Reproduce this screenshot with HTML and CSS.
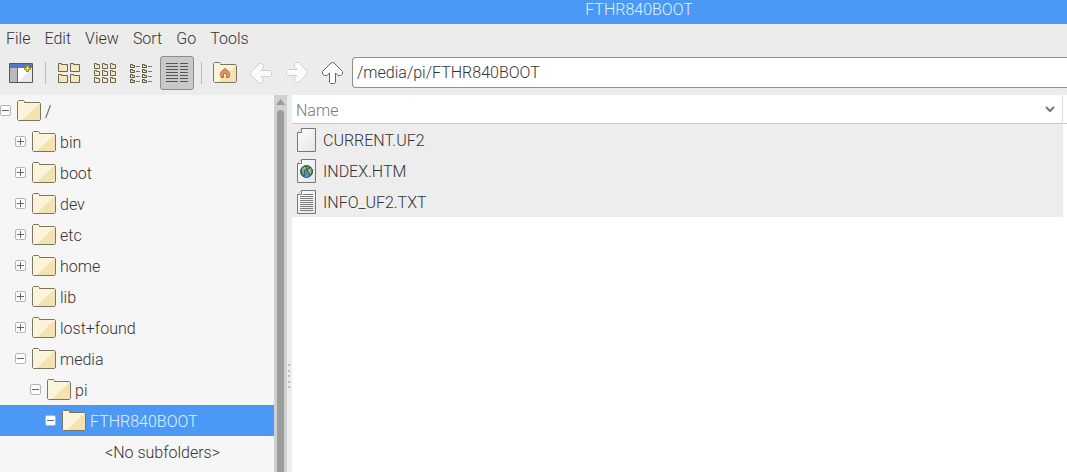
FILE: index.html
```html
<!DOCTYPE html>
<html lang="en">
<head>
    <meta charset="UTF-8">
    <meta name="viewport" content="width=device-width, initial-scale=1.0">
    <title>FTHR840BOOT</title>
    <link rel="stylesheet" href="styles.css">
</head>
<body>
    <!-- shared icons -->
    <svg class="defs" aria-hidden="true">
        <defs>
            <linearGradient id="paper" x1="0" y1="0" x2="1" y2="1">
                <stop offset="0" stop-color="#ffffff"/>
                <stop offset="1" stop-color="#e4e4e4"/>
            </linearGradient>
            <symbol id="folder" viewBox="0 0 24 22">
                <path d="M.5 19.500V1.500l1-1h5l1 1v1h15l1 1v16l-1 1h-21z" fill="#f4e3b0"/>
                <path d="M1 20V1h6v2h16L5 20z" fill="#fbf3da"/>
                <path d="M.5 19.500V1.500l1-1h5l1 1v1h15l1 1v16l-1 1h-21z" fill="none" stroke="#7d7564"/>
            </symbol>
            <symbol id="mini" viewBox="0 0 10 9">
                <path d="M.5 8.500v-8h3v1h6v7z" fill="#f8e6bd" stroke="#6c6552"/>
            </symbol>
            <symbol id="tiny" viewBox="0 0 6 6">
                <path d="M.5 5.500v-5h2v1h3v4z" fill="#f8e6bd" stroke="#6c6552"/>
            </symbol>
            <symbol id="page" viewBox="0 0 19 24">
                <path d="M4.500.5h14v23H.5v-19z" fill="url(#paper)" stroke="#777"/>
                <path d="M.5 4.500h4v-4" fill="#fff" stroke="#777"/>
            </symbol>
            <symbol id="arrow" viewBox="0 0 22 22">
                <path class="arrow-shape" d="M10.500.5Q12 .5 13 2L20.500 9.500V12L18.500 13.500H16L13.500 11V20.500L12.500 21.500H8.500L7.500 20.500V11L5 13.500H2.500L.5 12V9.500L8 2Q9 .5 10.500.5z" stroke="currentColor"/>
            </symbol>
        </defs>
    </svg>

    <header class="titlebar">
        <h1>FTHR840BOOT</h1>
    </header>
    <nav class="menubar">
        <button>File</button>
        <button>Edit</button>
        <button>View</button>
        <button>Sort</button>
        <button>Go</button>
        <button>Tools</button>
    </nav>
    <div class="toolbar">
        <button class="tool" aria-label="New window">
            <svg width="24" height="22" viewBox="0 0 24 22">
                <path d="M.5 1.500h23v19H.5z" fill="#e9e9e9"/>
                <path d="M1 6h7v14H1z" fill="#b9b9b9"/>
                <path d="M9 20V6h14z" fill="#fff"/>
                <path d="M1 2h22v4H1z" fill="#5873c8"/>
                <path d="M8.500 6v14" stroke="#666"/>
                <path d="M.5 1.500h23v19H.5z" fill="none" stroke="#55565c"/>
                <path d="M17.500 3.500h2v2h2v2h-2v2h-2v-2h-2v-2h2z" fill="#f6ee1c" stroke="#8a851c"/>
            </svg>
        </button>
        <span class="separator"></span>
        <button class="tool" aria-label="Icon view">
            <svg width="24" height="22" viewBox="0 0 24 22">
                <use href="#mini" x="1" y="1" width="10" height="9"/>
                <use href="#mini" x="13" y="1" width="10" height="9"/>
                <use href="#mini" x="1" y="12" width="10" height="9"/>
                <use href="#mini" x="13" y="12" width="10" height="9"/>
            </svg>
        </button>
        <button class="tool" aria-label="Thumbnail view">
            <svg width="24" height="22" viewBox="0 0 24 22">
                <use href="#tiny" x="1" y="1" width="6" height="6"/>
                <use href="#tiny" x="9" y="1" width="6" height="6"/>
                <use href="#tiny" x="17" y="1" width="6" height="6"/>
                <use href="#tiny" x="1" y="8" width="6" height="6"/>
                <use href="#tiny" x="9" y="8" width="6" height="6"/>
                <use href="#tiny" x="17" y="8" width="6" height="6"/>
                <use href="#tiny" x="1" y="15" width="6" height="6"/>
                <use href="#tiny" x="9" y="15" width="6" height="6"/>
                <use href="#tiny" x="17" y="15" width="6" height="6"/>
            </svg>
        </button>
        <button class="tool" aria-label="Compact view">
            <svg width="24" height="22" viewBox="0 0 24 22">
                <path d="M1.500 5.500v-3h2v1h2v2zM1.500 10.500v-3h2v1h2v2zM1.500 15.500v-3h2v1h2v2zM1.500 20.500v-3h2v1h2v2zM13.500 5.500v-3h2v1h2v2zM13.500 10.500v-3h2v1h2v2zM13.500 15.500v-3h2v1h2v2zM13.500 20.500v-3h2v1h2v2z" fill="#f1e4b5" stroke="#57523c"/>
                <path d="M7 4.500h4M7 9.500h4M7 14.500h4M7 19.500h4M19 4.500h4M19 9.500h4M19 14.500h4M19 19.500h4" stroke="#777"/>
            </svg>
        </button>
        <button class="tool active" aria-label="Detailed list view" aria-pressed="true">
            <svg width="24" height="22" viewBox="0 0 24 22">
                <path d="M1 1.500h12M15 1.500h8M1 4.500h12M15 4.500h8M1 7.500h12M15 7.500h8M1 10.500h12M15 10.500h8M1 13.500h12M15 13.500h8M1 16.500h12M15 16.500h8M1 19.500h12M15 19.500h8" stroke="#555"/>
            </svg>
        </button>
        <span class="separator"></span>
        <button class="tool" aria-label="Home folder">
            <svg width="24" height="22" viewBox="0 0 24 22">
                <use href="#folder" width="24" height="22"/>
                <path d="M7.500 11.500Q7.500 9.500 12 6.500q4.500 3 4.500 5l-.5 4h-2.500v-4h-3v4H8z" fill="#e99468" stroke="#b06c4c"/>
            </svg>
        </button>
        <button class="tool" aria-label="Back" disabled>
            <svg class="left" width="22" height="22"><use href="#arrow"/></svg>
        </button>
        <button class="tool" aria-label="Forward" disabled>
            <svg class="right" width="22" height="22"><use href="#arrow"/></svg>
        </button>
        <button class="tool" aria-label="Parent folder">
            <svg width="22" height="22"><use href="#arrow"/></svg>
        </button>
        <input class="path" type="text" aria-label="Location" value="/media/pi/FTHR840BOOT">
    </div>

    <main>
        <aside class="sidebar">
            <ul class="tree">
                <li>
                    <div class="row"><button class="toggle open" aria-label="Collapse /"></button><svg class="folder"><use href="#folder"/></svg><span>/</span></div>
                    <ul>
                        <li><div class="row"><button class="toggle" aria-label="Expand bin"></button><svg class="folder"><use href="#folder"/></svg><span>bin</span></div></li>
                        <li><div class="row"><button class="toggle" aria-label="Expand boot"></button><svg class="folder"><use href="#folder"/></svg><span>boot</span></div></li>
                        <li><div class="row"><button class="toggle" aria-label="Expand dev"></button><svg class="folder"><use href="#folder"/></svg><span>dev</span></div></li>
                        <li><div class="row"><button class="toggle" aria-label="Expand etc"></button><svg class="folder"><use href="#folder"/></svg><span>etc</span></div></li>
                        <li><div class="row"><button class="toggle" aria-label="Expand home"></button><svg class="folder"><use href="#folder"/></svg><span>home</span></div></li>
                        <li><div class="row"><button class="toggle" aria-label="Expand lib"></button><svg class="folder"><use href="#folder"/></svg><span>lib</span></div></li>
                        <li><div class="row"><button class="toggle" aria-label="Expand lost+found"></button><svg class="folder"><use href="#folder"/></svg><span>lost+found</span></div></li>
                        <li>
                            <div class="row"><button class="toggle open" aria-label="Collapse media"></button><svg class="folder"><use href="#folder"/></svg><span>media</span></div>
                            <ul>
                                <li>
                                    <div class="row"><button class="toggle open" aria-label="Collapse pi"></button><svg class="folder"><use href="#folder"/></svg><span>pi</span></div>
                                    <ul>
                                        <li>
                                            <div class="row selected"><button class="toggle open" aria-label="Collapse FTHR840BOOT"></button><svg class="folder"><use href="#folder"/></svg><span>FTHR840BOOT</span></div>
                                            <div class="row empty"><span>&lt;No subfolders&gt;</span></div>
                                        </li>
                                    </ul>
                                </li>
                            </ul>
                        </li>
                    </ul>
                </li>
            </ul>
        </aside>
        <div class="scrollbar">
            <svg width="9" height="6"><path d="M0 6l4.500-6L9 6z" fill="#999"/></svg>
            <div class="thumb"></div>
        </div>
        <div class="splitter"></div>
        <section class="files">
            <table>
                <thead>
                    <tr>
                        <th>
                            <div class="heading">
                                <span>Name</span>
                                <svg width="10" height="7"><path d="M1 1l4 4 4-4" fill="none" stroke="#777" stroke-width="2"/></svg>
                            </div>
                        </th>
                    </tr>
                </thead>
                <tbody>
                    <tr><td><div class="file">
                        <svg width="19" height="24"><use href="#page"/></svg>
                        <span>CURRENT.UF2</span>
                    </div></td></tr>
                    <tr><td><div class="file">
                        <svg width="19" height="24">
                            <use href="#page"/>
                            <circle cx="9.500" cy="12.500" r="6" fill="#5590c8" stroke="#2f4f72"/>
                            <path d="M5 9l3-2 2 1-1 3-2 1 1 3-1 2-2-3-1-3zM12 7l3 3v4l-2 3-1-3-2-2 1-2 2-1z" fill="#8fbf6b" stroke="#35564a"/>
                        </svg>
                        <span>INDEX.HTM</span>
                    </div></td></tr>
                    <tr><td><div class="file">
                        <svg width="19" height="24">
                            <use href="#page"/>
                            <path d="M6 4.500h10M3 6.500h13M3 8.500h13M3 10.500h13M3 12.500h13M3 14.500h13M3 16.500h13M3 18.500h13M3 20.500h13" stroke="#7c7c7c"/>
                        </svg>
                        <span>INFO_UF2.TXT</span>
                    </div></td></tr>
                </tbody>
            </table>
        </section>
    </main>
</body>
</html>
```

FILE: styles.css
```css
* {
    box-sizing: border-box;
}
body {
    margin: 0;
    min-height: 100vh;
    display: flex;
    flex-direction: column;
    overflow: hidden;
    background-color: #ececec;
    color: #333;
    font-family: Roboto, sans-serif;
    font-size: 16px;
    font-weight: 300;
}
button,
input {
    font: inherit;
    color: inherit;
}
svg {
    display: block;
    flex: none;
}
.defs {
    position: absolute;
    width: 0;
    height: 0;
}
.titlebar {
    height: 24px;
    padding-left: 211px;
    background-color: #4c98f5;
    color: #dff3ff;
    text-align: center;
}
.titlebar h1 {
    margin: 0;
    font-size: 16px;
    font-weight: 300;
    line-height: 20px;
}
.menubar {
    display: flex;
    gap: 14px;
    height: 28px;
    padding: 0 6px;
}
.menubar button {
    padding: 0;
    border: none;
    background: none;
}
.toolbar {
    display: flex;
    align-items: center;
    height: 43px;
    padding: 0 0 2px 3px;
}
.tool {
    display: flex;
    align-items: center;
    justify-content: center;
    flex: none;
    width: 34px;
    height: 34px;
    margin: 0 1px;
    padding: 0;
    border: 1px solid transparent;
    border-radius: 3px;
    background: none;
    color: #666;
}
.tool.active {
    border-color: #8c8c8c;
    background-color: #c9c9c9;
}
.arrow-shape {
    fill: #fff;
}
.tool:disabled {
    color: #c8c8c8;
}
.tool:disabled svg {
    opacity: 0.8;
}
.left {
    transform: rotate(-90deg);
}
.right {
    transform: rotate(90deg);
}
.separator {
    flex: none;
    width: 12px;
    height: 22px;
    background: linear-gradient(#bbb, #bbb) center / 1px 100% no-repeat;
}
.path {
    flex: 1;
    min-width: 0;
    height: 31px;
    margin-left: 1px;
    padding: 0 4px;
    border: 1px solid #8f8f8f;
    border-right: none;
    border-radius: 4px 0 0 4px;
    outline: none;
    background-color: #fff;
}
main {
    display: flex;
    flex: 1;
}
.sidebar {
    flex: none;
    width: 274px;
    background-color: #f6f6f6;
}
.tree,
.tree ul {
    margin: 0;
    padding: 0;
    list-style: none;
}
.row {
    display: flex;
    align-items: center;
    height: 31px;
}
.row span,
.heading span,
.file span {
    padding-top: 2px;
}
.tree ul .row {
    padding-left: 15px;
}
.tree ul ul .row {
    padding-left: 30px;
}
.tree ul ul ul .row {
    padding-left: 45px;
}
.tree ul ul ul .empty {
    padding-left: 105px;
}
.folder {
    width: 24px;
    height: 22px;
    margin: 0 4px 0 6px;
}
.toggle {
    flex: none;
    width: 11px;
    height: 11px;
    padding: 0;
    border: 1px solid #b5b5b5;
    border-radius: 2px;
    background:
        linear-gradient(#666, #666) center / 7px 1px no-repeat,
        linear-gradient(#666, #666) center / 1px 7px no-repeat,
        #fff;
}
.toggle.open {
    background: linear-gradient(#666, #666) center / 7px 1px no-repeat, #fff;
}
.selected {
    background-color: #4c98f5;
    color: #dff3ff;
}
.scrollbar {
    display: flex;
    flex-direction: column;
    align-items: center;
    flex: none;
    gap: 5px;
    width: 13px;
    padding-top: 4px;
    background-color: #d0d0d0;
}
.thumb {
    flex: 1;
    width: 7px;
    border-radius: 4px 4px 0 0;
    background-color: #9c9c9c;
}
.splitter {
    flex: none;
    width: 5px;
    background:
        linear-gradient(#bbb, #bbb) 1px 269px / 2px 2px no-repeat,
        linear-gradient(#bbb, #bbb) 1px 275px / 2px 2px no-repeat,
        linear-gradient(#bbb, #bbb) 1px 280px / 2px 2px no-repeat,
        linear-gradient(#bbb, #bbb) 1px 286px / 2px 2px no-repeat,
        linear-gradient(#bbb, #bbb) 1px 291px / 2px 2px no-repeat,
        #ececec;
}
.files {
    flex: 1;
    padding-right: 4px;
    background: linear-gradient(#c8c8c8, #c8c8c8) 0 28px / 100% 1px no-repeat, #fff;
}
table {
    width: 100%;
    border-collapse: collapse;
}
th,
td {
    padding: 0;
    font-weight: 300;
}
.heading {
    display: flex;
    align-items: center;
    justify-content: space-between;
    height: 29px;
    padding: 0 7px 0 4px;
    border-right: 1px solid #ddd;
    color: #777;
}
.file {
    display: flex;
    align-items: center;
    gap: 7px;
    height: 31px;
    padding-left: 5px;
    background-color: #ededed;
}
```
